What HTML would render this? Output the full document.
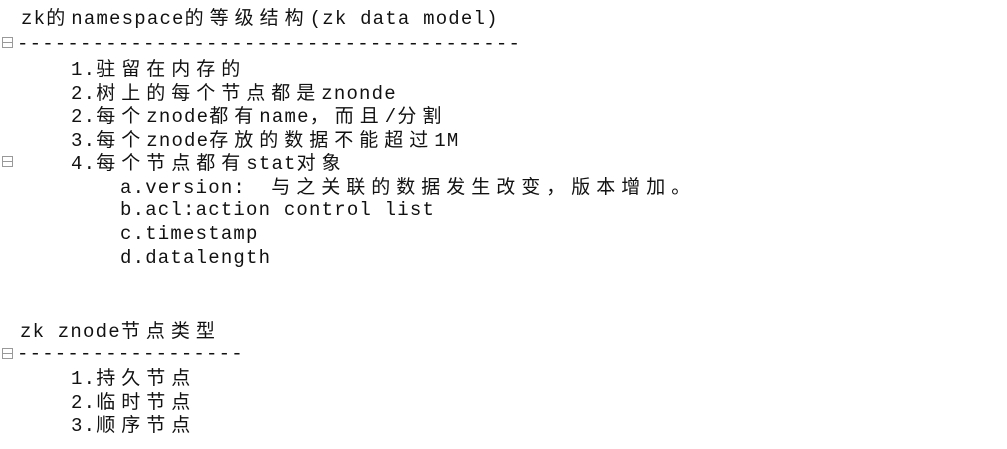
<!DOCTYPE html>
<html><head><meta charset="utf-8"><style>
html,body{margin:0;padding:0;background:#fff;width:1007px;height:449px;overflow:hidden}
.l{position:absolute;white-space:pre;font-family:"Liberation Mono","Noto Sans CJK SC",monospace;font-size:19px;line-height:24px;color:#111;letter-spacing:1.2px}
.c{font-family:"Noto Sans CJK SC","WenQuanYi Zen Hei",sans-serif;font-size:19px;letter-spacing:6px}
.b{position:absolute;left:2px;width:9px;height:9px;border:1px solid #999;box-sizing:content-box}
.b::after{content:"";position:absolute;left:0;right:0;top:4px;height:1px;background:#999}
</style></head><body>
<div class="l" style="left:21px;top:5px">zk<span class="c">的</span>namespace<span class="c">的等级结构</span>(zk data model)</div>
<div class="b" style="top:37px"></div>
<div class="l" style="left:17px;top:32px">----------------------------------------</div>
<div class="l" style="left:71px;top:56px">1.<span class="c">驻留在内存的</span></div>
<div class="l" style="left:71px;top:80px">2.<span class="c">树上的每个节点都是</span>znonde</div>
<div class="l" style="left:71px;top:103px">2.<span class="c">每个</span>znode<span class="c">都有</span>name<span class="c">，而且</span>/<span class="c">分割</span></div>
<div class="l" style="left:71px;top:127px">3.<span class="c">每个</span>znode<span class="c">存放的数据不能超过</span>1M</div>
<div class="b" style="top:156px"></div>
<div class="l" style="left:71px;top:150px">4.<span class="c">每个节点都有</span>stat<span class="c">对象</span></div>
<div class="l" style="left:120px;top:174px">a.version:  <span class="c">与之关联的数据发生改变，版本增加。</span></div>
<div class="l" style="left:120px;top:198px">b.acl:action control list</div>
<div class="l" style="left:120px;top:222px">c.timestamp</div>
<div class="l" style="left:120px;top:246px">d.datalength</div>
<div class="l" style="left:20px;top:318px">zk znode<span class="c">节点类型</span></div>
<div class="b" style="top:348px"></div>
<div class="l" style="left:17px;top:342px">------------------</div>
<div class="l" style="left:71px;top:365px">1.<span class="c">持久节点</span></div>
<div class="l" style="left:71px;top:389px">2.<span class="c">临时节点</span></div>
<div class="l" style="left:71px;top:412px">3.<span class="c">顺序节点</span></div>
</body></html>
